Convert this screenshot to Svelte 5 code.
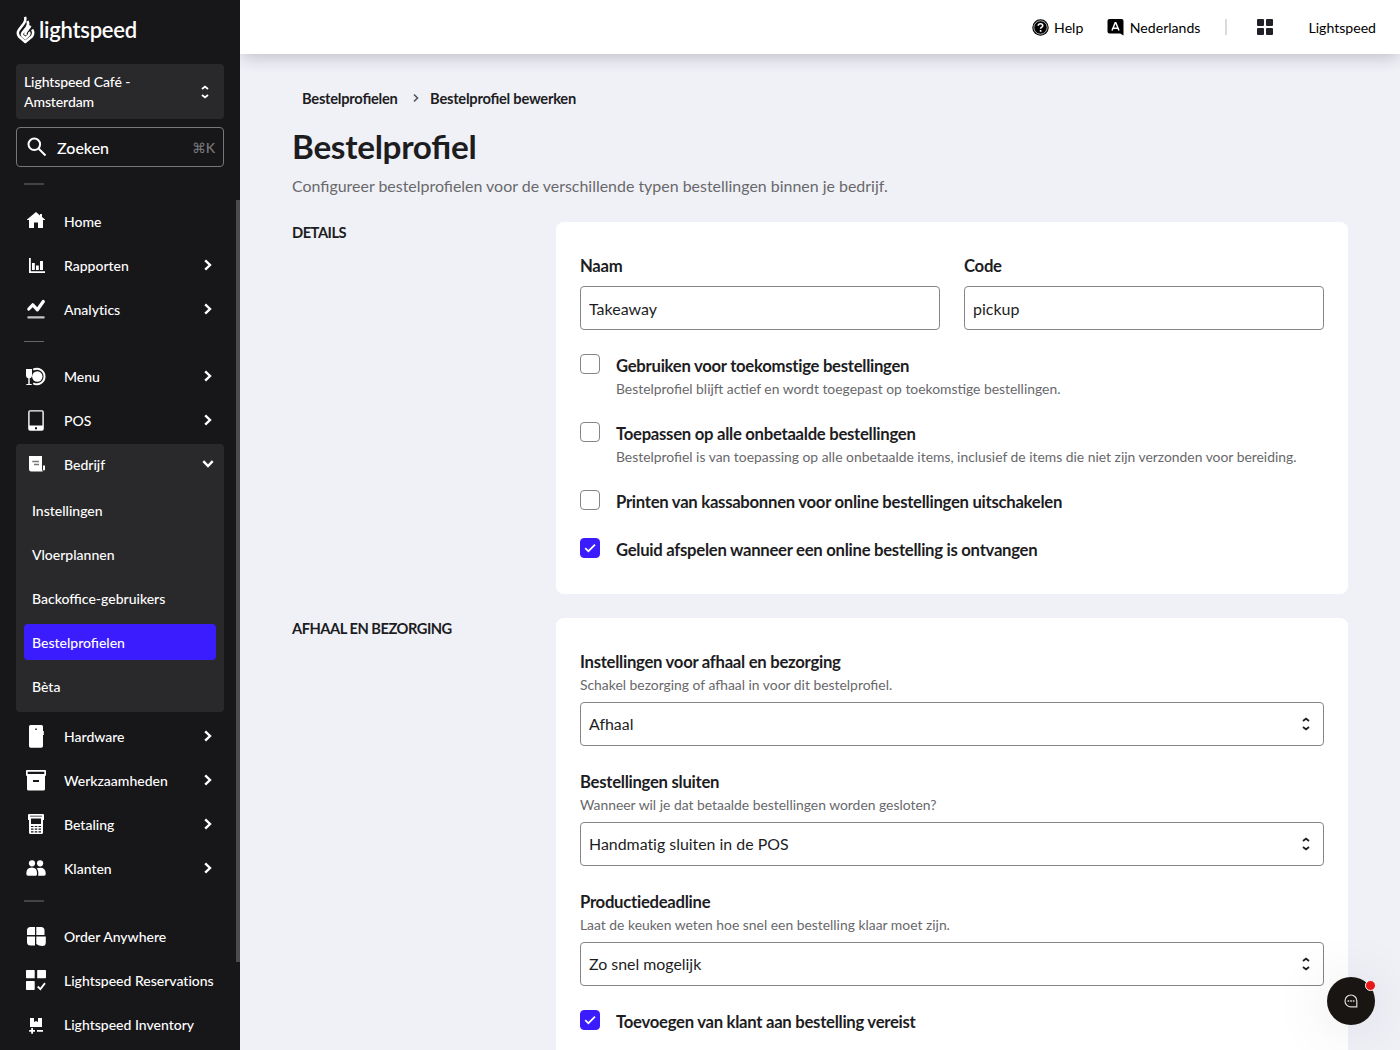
<script>
  let form = $state({
    name: 'Takeaway',
    code: 'pickup',
    future: false,
    unpaid: false,
    noReceipts: false,
    sound: true,
    customer: true,
  });

  let open = $state('Bedrijf');

  const groups = [
    [
      { icon: 'home', label: 'Home' },
      { icon: 'reports', label: 'Rapporten', more: true },
      { icon: 'analytics', label: 'Analytics', more: true },
    ],
    [
      { icon: 'menu', label: 'Menu', more: true },
      { icon: 'pos', label: 'POS', more: true },
      {
        icon: 'business',
        label: 'Bedrijf',
        more: true,
        children: ['Instellingen', 'Vloerplannen', 'Backoffice-gebruikers', 'Bestelprofielen', 'Bèta'],
      },
      { icon: 'hardware', label: 'Hardware', more: true },
      { icon: 'operations', label: 'Werkzaamheden', more: true },
      { icon: 'payment', label: 'Betaling', more: true },
      { icon: 'customers', label: 'Klanten', more: true },
    ],
    [
      { icon: 'order', label: 'Order Anywhere' },
      { icon: 'reservations', label: 'Lightspeed Reservations' },
      { icon: 'inventory', label: 'Lightspeed Inventory' },
    ],
  ];

  const options = [
    {
      key: 'future',
      label: 'Gebruiken voor toekomstige bestellingen',
      hint: 'Bestelprofiel blijft actief en wordt toegepast op toekomstige bestellingen.',
    },
    {
      key: 'unpaid',
      label: 'Toepassen op alle onbetaalde bestellingen',
      hint: 'Bestelprofiel is van toepassing op alle onbetaalde items, inclusief de items die niet zijn verzonden voor bereiding.',
    },
    { key: 'noReceipts', label: 'Printen van kassabonnen voor online bestellingen uitschakelen' },
    { key: 'sound', label: 'Geluid afspelen wanneer een online bestelling is ontvangen' },
  ];

  const selects = [
    {
      label: 'Instellingen voor afhaal en bezorging',
      hint: 'Schakel bezorging of afhaal in voor dit bestelprofiel.',
      value: 'Afhaal',
    },
    {
      label: 'Bestellingen sluiten',
      hint: 'Wanneer wil je dat betaalde bestellingen worden gesloten?',
      value: 'Handmatig sluiten in de POS',
    },
    {
      label: 'Productiedeadline',
      hint: 'Laat de keuken weten hoe snel een bestelling klaar moet zijn.',
      value: 'Zo snel mogelijk',
    },
  ];
</script>

{#snippet sorter()}
  <svg class="sorter" width="10" height="14" viewBox="0 0 10 14">
    <path d="M2 4 5 1.600l3 2.400M2 10l3 2.400 3-2.400" fill="none" stroke="currentColor" stroke-width="1.900" />
  </svg>
{/snippet}

{#snippet icon(name)}
  <svg class="icon" width="24" height="24" viewBox="0 0 24 24" fill="currentColor">
    {#if name === 'home'}
      <path d="M12 3 3 10.600V11h2v8h5v-5.500h4V19h5v-8h2v-.4L18 8V5h-2v1.400z" />
    {:else if name === 'reports'}
      <path d="M5 5h1.800v13.200H21V20H5zM8 10h2.800v7H8zM12 12.500h2.800V17H12zM16 8h3v9h-3z" />
    {:else if name === 'analytics'}
      <path d="m4.800 12 4-4.200 4.600 5L19.300 4.500" fill="none" stroke="currentColor" stroke-width="3.200" stroke-linecap="round" stroke-linejoin="round" />
      <rect x="3.300" y="19.300" width="17.400" height="2.200" rx="1" opacity=".75" />
    {:else if name === 'menu'}
      <path d="M2 5h6v6.500Q8 14 5.700 14.300v5.600h2V21H2.300v-1.100h2v-5.600Q2 14 2 11.500z" />
      <path d="M9.200 5.700a7.700 7.700 0 1 1 0 13.600" fill="none" stroke="currentColor" stroke-width="2" />
      <circle cx="13.300" cy="12.500" r="5.200" />
    {:else if name === 'pos'}
      <path fill-rule="evenodd" d="M6 2.200h12a1.800 1.800 0 0 1 1.800 1.800v16.700a2 2 0 0 1-2 2H6.200a2 2 0 0 1-2-2V4A1.800 1.800 0 0 1 6 2.200zM5.600 3.600v14h12.800v-14zM11 19.200v2h2v-2z" />
    {:else if name === 'business'}
      <path d="M5 4h13v12.500q0 2.500 1.200 3.100H7.200Q5 19.600 5 17zM19 13.400h2v4.200q0 1-1 1t-1-1z" />
      <path d="M8.300 9.500h6.600M10 12.500h5" stroke="#777779" stroke-width="1.400" />
    {:else if name === 'hardware'}
      <path fill-rule="evenodd" d="M6.500 1h11Q19 1 19 2.500V7h.8v4H19v11q0 1.700-1.700 1.700H6.700Q5 23.700 5 22V2.500Q5 1 6.500 1zM11.300 4.600v1.500h1.500V4.600z" />
    {:else if name === 'operations'}
      <path fill-rule="evenodd" d="M3 2h18q1 0 1 1v4q0 1-1 1v13q0 1.500-1.500 1.500h-15Q3 22.500 3 21V8Q2 8 2 7V3q0-1 1-1zM3.700 3.800v2.200h16.600V3.800zM9 12v2h6v-2z" />
    {:else if name === 'payment'}
      <path fill-rule="evenodd" d="M5 2h14q1 0 1 1v5h-1v12.500q0 1.500-1.500 1.500h-11Q5 22 5 20.500V8H4V3q0-1 1-1zM6 3.700v.8h12v-.8zM7 6.400V12h10V6.400z" />
      <path d="M7 14.500h10M7 17.200h10M7 19.900h10" stroke="#17171a" stroke-width="1.200" stroke-dasharray="2.500 1.250" />
    {:else if name === 'customers'}
      <circle cx="8" cy="7.300" r="3.100" />
      <circle cx="16.100" cy="7.300" r="3.100" />
      <path d="M2.300 17.500Q2.300 11.500 7.800 11.500T13 17.500q0 2.200-1 2.200H4q-1.700 0-1.700-2.200zM12.500 12.300q8.800-2.600 9.300 5.200 0 2.200-1.800 2.200h-5.800q.8-5-1.700-7.400z" />
    {:else if name === 'order'}
      <path d="M6.500 3H11v8H3V6.500Q3 3 6.500 3zM12.300 3H17q3.500 0 3.500 3.500V11h-8.200zM3 12.500h8v9H6.500Q3 21.500 3 18zM12.300 12.500h9.500v6q0 3.500-3.500 3.500t-6-2z" />
    {:else if name === 'reservations'}
      <path d="M2.700 2H10q.7 0 .7.700v7.600H2.700Q2 10.300 2 9.600V2.700Q2 2 2.700 2zM13.200 2h8q.8 0 .8.800V9.500q0 .8-.8.800h-8zM2.700 13H10q.7 0 .7.700V21.200q0 .8-.8.800H2.700Q2 22 2 21.200V13.700q0-.7.700-.7z" />
      <path d="m13.700 18.500 2.700 2.600 4.600-6" fill="none" stroke="currentColor" stroke-width="1.800" />
    {:else if name === 'inventory'}
      <path d="M6 6h4v4l2-1 2 1V6h4v9H6zM7.200 16h1.800v2H11v1.800H9v2H7.200v-2h-2V18h2zM13 18h6v1.800h-6z" />
    {/if}
  </svg>
{/snippet}

{#snippet checkbox(key, label, hint)}
  <label class="check">
    <input type="checkbox" bind:checked={form[key]} />
    <span class="box">
      {#if form[key]}
        <svg width="14" height="14" viewBox="0 0 14 14">
          <path d="m2.200 7.200 3.200 3L12 3.700" fill="none" stroke="#fff" stroke-width="1.700" />
        </svg>
      {/if}
    </span>
    <span class="check-text">
      <strong>{label}</strong>
      {#if hint}<small>{hint}</small>{/if}
    </span>
  </label>
{/snippet}

<div class="app">
  <aside>
    <div class="logo">
      <svg width="19" height="28" viewBox="0 0 19 28" fill="none" stroke="#fff" stroke-width="2.500">
        <path d="M9 .8Q10.200 4.200 7.800 7.500L3 13.800Q.6 17 3 20.500L9.300 26l6.600-5.500q2.500-3.500.2-7" stroke-linejoin="round" />
        <path d="M11.500 5q1.500 3.500-.8 6.500l-4 5q-1.500 2 0 3.500L9.300 22.300l3.200-3q1.500-1.600.4-3.300" />
        <path d="m14.500 9.700-5 6.800v2.700" />
      </svg>
      <span>lightspeed</span>
    </div>

    <button class="location">
      <span>Lightspeed Café - Amsterdam</span>
      {@render sorter()}
    </button>

    <button class="search">
      <svg width="20" height="20" viewBox="0 0 20 20" fill="none" stroke="currentColor" stroke-width="2">
        <circle cx="7.300" cy="7.300" r="5.800" />
        <path d="m11.500 11.500 7 7" />
      </svg>
      <span>Zoeken</span>
      <kbd>⌘K</kbd>
    </button>

    <nav>
      {#each groups as items}
        <div class="group">
          {#each items as item}
            <div class="entry" class:open={item.children && open === item.label}>
              <button class="item" onclick={() => (open = open === item.label ? '' : item.label)}>
                {@render icon(item.icon)}
                <span>{item.label}</span>
                {#if item.more}
                  <svg class="chevron" width="12" height="12" viewBox="0 0 12 12">
                    <path d="M3.200 1.300 8 6l-4.800 4.700" fill="none" stroke="currentColor" stroke-width="2.400" />
                  </svg>
                {/if}
              </button>
              {#if item.children && open === item.label}
                <div class="children">
                  {#each item.children as child}
                    <a href="#{child}" class:active={child === 'Bestelprofielen'}>{child}</a>
                  {/each}
                </div>
              {/if}
            </div>
          {/each}
        </div>
      {/each}
    </nav>
    <div class="scrollbar"></div>
  </aside>

  <div class="page">
    <header>
      <a href="#help" class="help">
        <svg width="17" height="17" viewBox="0 0 17 17">
          <circle cx="8.500" cy="8.500" r="8.200" />
          <circle cx="8.500" cy="8.500" r="6.700" fill="none" stroke="#fff" stroke-width=".7" />
          <path d="M6.200 6.800q.1-2 2.300-2t2.300 1.800q0 1-1.200 1.700-1 .5-1 1.500M8.600 11v1.700" fill="none" stroke="#fff" stroke-width="1.600" />
        </svg>
        Help
      </a>
      <a href="#lang" class="lang">
        <svg width="17" height="17" viewBox="0 0 17 17">
          <path d="M2.500 0h12Q16.500 0 16.500 2v14.500L13.200 14.500H2.500q-2 0-2-2V2q0-2 2-2z" />
          <path d="M5 11.500 8.200 3.800h.6L12 11.500M6.200 9.200h4.600" fill="none" stroke="#fff" stroke-width="1.500" />
        </svg>
        Nederlands
      </a>
      <span class="separator"></span>
      <svg class="apps" width="16" height="16" viewBox="0 0 16 16" fill="#202127">
        <rect width="7" height="7" rx="1" />
        <rect x="9" width="7" height="7" rx="1" />
        <rect y="9" width="7" height="7" rx="1" />
        <rect x="9" y="9" width="7" height="7" rx="1" />
      </svg>
      <a href="#account">Lightspeed</a>
    </header>

    <main>
      <div class="breadcrumbs">
        <a href="#profiles">Bestelprofielen</a>
        <svg width="8" height="10" viewBox="0 0 8 10">
          <path d="m2 1.500 3.500 3.500L2 8.500" fill="none" stroke="#555557" stroke-width="1.600" />
        </svg>
        <span>Bestelprofiel bewerken</span>
      </div>
      <h1>Bestelprofiel</h1>
      <p class="intro">Configureer bestelprofielen voor de verschillende typen bestellingen binnen je bedrijf.</p>

      <section>
        <h2>DETAILS</h2>
        <div class="card">
          <div class="row">
            <div class="field">
              <label for="name">Naam</label>
              <input id="name" type="text" bind:value={form.name} />
            </div>
            <div class="field">
              <label for="code">Code</label>
              <input id="code" type="text" bind:value={form.code} />
            </div>
          </div>
          {#each options as o}
            {@render checkbox(o.key, o.label, o.hint)}
          {/each}
        </div>
      </section>

      <section>
        <h2>AFHAAL EN BEZORGING</h2>
        <div class="card">
          {#each selects as s}
            <div class="field">
              <strong>{s.label}</strong>
              <small>{s.hint}</small>
              <button class="select">
                <span>{s.value}</span>
                {@render sorter()}
              </button>
            </div>
          {/each}
          {@render checkbox('customer', 'Toevoegen van klant aan bestelling vereist')}
        </div>
      </section>
    </main>
  </div>

  <button class="chat" aria-label="Chat">
    <svg width="14" height="14" viewBox="0 0 14 14" fill="none" stroke="#dedddb">
      <path d="M12.800 12.800H7A5.900 5.900 0 1 1 12.800 7z" stroke-width="1.200" />
      <path d="M3.600 7h1.600M6.200 7h1.600M8.800 7h1.600" stroke-width="1.300" />
    </svg>
    <span class="badge"></span>
  </button>
</div>

<style>
  :global(body) {
    overflow: hidden;
  }

  .app {
    position: relative;
    display: flex;
    width: 100%;
    height: 1050px;
    overflow: hidden;
    background: #f0f1f7;
    color: #1d1d1f;
    font-family: Lato, 'Liberation Sans', sans-serif;
    font-size: 16px;
  }

  .app * {
    box-sizing: border-box;
  }

  button,
  input {
    font: inherit;
    color: inherit;
    text-align: left;
    margin: 0;
  }

  a {
    color: inherit;
    text-decoration: none;
  }

  /* Sidebar */
  aside {
    position: relative;
    flex: none;
    width: 240px;
    padding: 0 16px;
    background: #17171a;
    color: #fff;
    font-size: 14px;
    font-weight: 500;
    overflow: hidden;
  }

  .logo {
    display: flex;
    align-items: center;
    gap: 4px;
    height: 64px;
    padding-bottom: 4px;
  }

  .logo span {
    font-size: 22px;
    font-weight: 600;
    line-height: 28px;
    letter-spacing: -0.25px;
  }

  .location {
    display: flex;
    align-items: center;
    justify-content: space-between;
    width: 100%;
    height: 55px;
    padding: 1px 14px 0 8px;
    border: 0;
    border-radius: 4px;
    background: #29292b;
    line-height: 20px;
  }

  .location span {
    width: 130px;
    letter-spacing: -0.1px;
  }

  .search {
    display: flex;
    align-items: center;
    width: 100%;
    height: 40px;
    margin-top: 8px;
    padding: 0 8px 0 10px;
    border: 1px solid #77777a;
    border-radius: 4px;
    background: none;
    font-size: 16px;
  }

  .search span {
    margin: 1px 0 0 10px;
  }

  kbd {
    margin-left: auto;
    color: #77777a;
    font-family: inherit;
    font-size: 14px;
  }

  nav {
    padding-top: 16px;
  }

  .group::before {
    content: '';
    display: block;
    width: 20px;
    height: 2px;
    margin: 0 8px 14px;
    background: #434346;
  }

  .group + .group {
    padding-top: 10px;
  }

  .group + .group::before {
    height: 1px;
    margin-bottom: 12px;
    background: #66666a;
  }

  .group:last-child::before {
    height: 2px;
    background: #434346;
  }

  .item {
    display: flex;
    align-items: center;
    width: 100%;
    height: 44px;
    padding: 0 10px 0 8px;
    border: 0;
    background: none;
  }

  .item span {
    padding-top: 1px;
    margin-left: 16px;
    white-space: nowrap;
    font-variant-ligatures: none;
  }

  .chevron {
    margin-left: auto;
  }

  .open {
    margin: 2px 0;
    padding-bottom: 4px;
    border-radius: 4px;
    background: #29292b;
  }

  .open .item {
    height: 40px;
  }

  .open .chevron {
    transform: rotate(90deg);
  }

  .children {
    display: flex;
    flex-direction: column;
    gap: 8px;
    padding: 8px 8px 4px;
  }

  .children a {
    height: 36px;
    padding: 1px 8px 0;
    border-radius: 4px;
    line-height: 36px;
  }

  .children a.active {
    background: #3b1cff;
  }

  .scrollbar {
    position: absolute;
    top: 200px;
    right: 0;
    width: 4px;
    height: 762px;
    background: #4b4b4c;
  }

  /* Top bar */
  .page {
    flex: 1;
    min-width: 0;
  }

  header {
    display: flex;
    align-items: center;
    justify-content: flex-end;
    height: 54px;
    padding-right: 24px;
    background: #fff;
    box-shadow: 0 5px 16px -2px rgba(30, 30, 40, 0.24);
    color: #000;
    font-size: 14.1px;
  }

  header a {
    display: flex;
    align-items: center;
    gap: 5.5px;
    padding-top: 1px;
  }

  .help {
    margin-right: 24px;
  }

  header a svg {
    margin-top: -1px;
  }

  .separator {
    width: 2px;
    height: 16px;
    margin: 0 30px 0 25px;
    background: #d7dbe0;
  }

  .apps {
    margin-right: 35px;
  }

  /* Content */
  main {
    padding: 34px 52px 0;
  }

  .breadcrumbs {
    display: flex;
    align-items: center;
    padding-left: 10px;
    font-size: 14.7px;
    font-weight: 700;
    font-feature-settings: 'liga' 1;
    letter-spacing: -0.25px;
    line-height: 20px;
  }

  .breadcrumbs svg {
    margin: 0 10.5px 0 14px;
  }

  h1 {
    margin: 18px 0 0;
    font-size: 33.3px;
    font-feature-settings: 'liga' 1;
    letter-spacing: -0.3px;
    line-height: 40px;
  }

  .intro {
    margin: 8px 0 24px;
    color: #68686b;
    font-size: 15.94px;
    line-height: 24px;
  }

  section {
    display: grid;
    grid-template-columns: 264px 1fr;
    margin-bottom: 24px;
  }

  h2 {
    margin: 0;
    font-size: 14.7px;
    letter-spacing: -0.5px;
    line-height: 20px;
  }

  .card {
    display: flex;
    flex-direction: column;
    gap: 24px;
    padding: 32px 24px;
    border-radius: 8px;
    background: #fff;
  }

  .row {
    display: grid;
    grid-template-columns: 1fr 1fr;
    gap: 24px;
  }

  .field {
    display: flex;
    flex-direction: column;
  }

  .field label,
  strong {
    font-size: 16.7px;
    font-weight: 700;
    letter-spacing: -0.28px;
    line-height: 24px;
  }

  .field label {
    margin-bottom: 8px;
  }

  small {
    color: #68686b;
    font-size: 13.88px;
    line-height: 22px;
  }

  .field input,
  .select {
    width: 100%;
    height: 44px;
    padding: 1px 8px 0;
    border: 1px solid #858588;
    border-radius: 4px;
    background: #fff;
    outline: none;
    font-variant-ligatures: none;
  }

  .select {
    display: flex;
    align-items: center;
    justify-content: space-between;
    margin-top: 6px;
    padding: 0 12px 0 8px;
  }

  .select span {
    margin-top: -1px;
    font-size: 15.9px;
  }

  .check {
    display: flex;
    gap: 16px;
  }

  .check input {
    display: none;
  }

  .box {
    display: flex;
    align-items: center;
    justify-content: center;
    flex: none;
    width: 20px;
    height: 20px;
    border: 1px solid #858588;
    border-radius: 4px;
  }

  .check input:checked + .box {
    border-color: #3b1cff;
    background: #3b1cff;
  }

  .check-text {
    display: flex;
    flex-direction: column;
  }

  .check small {
    margin-bottom: -2px;
  }

  /* Chat launcher */
  .chat {
    position: absolute;
    right: 25px;
    bottom: 25px;
    display: flex;
    align-items: center;
    justify-content: center;
    width: 48px;
    height: 48px;
    padding: 0;
    border: 0;
    border-radius: 50%;
    background: #191512;
    box-shadow: 0 4px 60px rgba(30, 30, 50, 0.12);
  }

  .badge {
    position: absolute;
    top: 3px;
    right: -1px;
    width: 11px;
    height: 11px;
    border: 1px solid #fff;
    border-radius: 50%;
    background: #e5191c;
  }
</style>
